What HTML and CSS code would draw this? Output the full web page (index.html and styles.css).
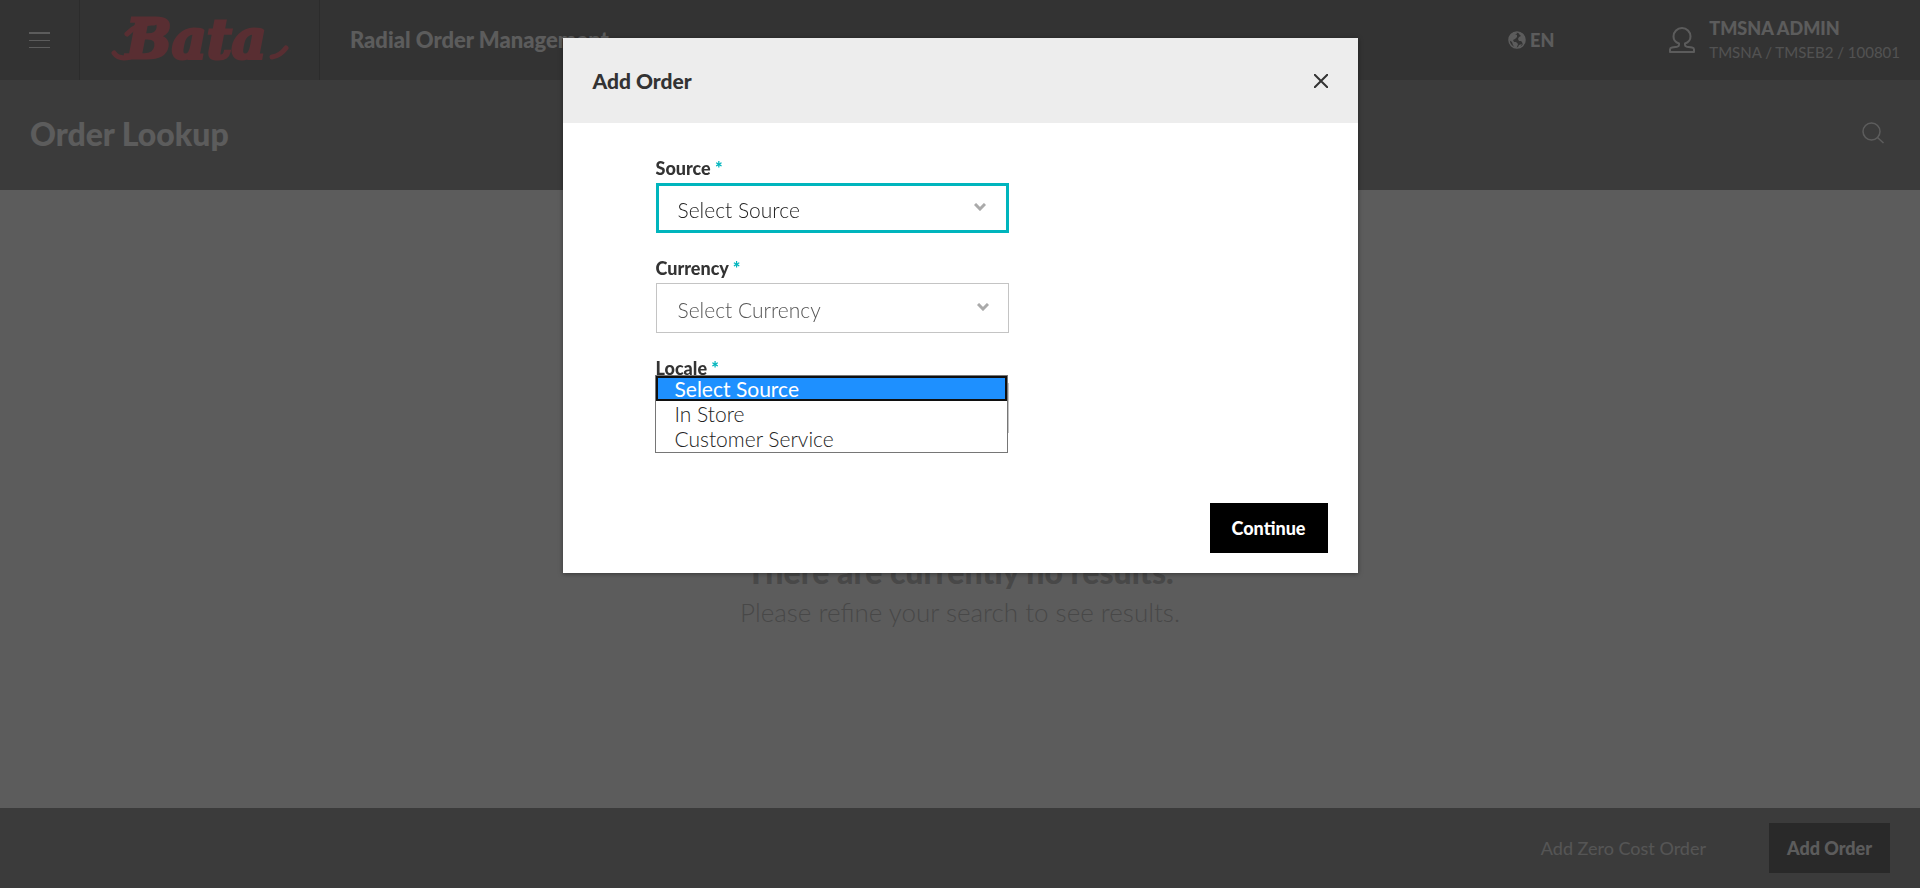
FILE: index.html
```html
<!DOCTYPE html>
<html lang="en">
<head>
<meta charset="utf-8">
<title>Radial Order Management</title>
<link rel="stylesheet" href="styles.css">
</head>
<body>
<div class="app">
  <header class="topbar">
    <button class="menu-btn" type="button" aria-label="Menu">
      <svg width="22" height="18" viewBox="0 0 22 18" fill="#fff" aria-hidden="true"><path d="M0 1h21v2H0zM0 9h21v1H0zM0 16h21v1H0z"/></svg>
    </button>
    <a class="brand" href="#" aria-label="Bata">
      <svg class="brand-logo" width="180" height="64" viewBox="0 0 180 64" aria-hidden="true">
        <text class="brand-text" x="16" y="50">Bata</text>
        <path class="brand-stroke" d="M4 45q5 7 16 4M17 26Q28 14 44 15M162 49q8-1 14-9"/>
      </svg>
    </a>
    <div class="app-name">Radial Order Management</div>
    <button class="lang-btn" type="button">
      <svg width="18" height="18" viewBox="0 0 18 18" aria-hidden="true">
        <circle cx="9" cy="9" r="8" fill="none" stroke="#fff" stroke-width="1.500"/>
        <path fill="#fff" d="M1 8 2 4 6 1h2l1 2-2 1 2 0v2L7 8 5 9l1 2 2 0 2 2-1 3-2 1-2-3-1-3-3-2zM10 1l5 2 2 5v3l-2 3-1-3-1-1-2 0-1-2 1-2 2-1-2-2zM11 14l3-1-2 3-2 0z"/>
      </svg>
      <span>EN</span>
    </button>
    <div class="user">
      <svg width="26" height="26" viewBox="0 0 26 26" fill="none" stroke="#fff" stroke-width="2" stroke-linejoin="round" aria-hidden="true"><path d="M10 16.500C7 15.500 4.500 13 4.500 9.500a8.500 8.500 0 0 1 17 0c0 3.500-2.500 6-5.500 7v1.500c0 1 1 1.500 2 1.700l5 .8c1.500.3 2 .8 2 2v2.500H1v-2.500c0-1.200.5-1.700 2-2l5-.8c1-.2 2-.7 2-1.700z"/></svg>
      <div class="user-text">
        <div class="user-name">TMSNA ADMIN</div>
        <div class="user-meta">TMSNA / TMSEB2 / 100801</div>
      </div>
    </div>
  </header>
  <div class="subbar">
    <h1 class="page-title">Order Lookup</h1>
    <button class="search-btn" type="button" aria-label="Search">
      <svg width="22" height="22" viewBox="0 0 22 22" fill="none" stroke="#fff" stroke-width="1.5" aria-hidden="true"><circle cx="9.500" cy="9.500" r="8.500"/><path d="m15.500 15.500 6 5.500"/></svg>
    </button>
  </div>
  <main class="results">
    <h2 class="empty-title">There are currently no results.</h2>
    <p class="empty-text">Please refine your search to see results.</p>
  </main>
  <footer class="footer">
    <a class="footer-link" href="#">Add Zero Cost Order</a>
    <button class="btn btn-footer" type="button">Add Order</button>
  </footer>
</div>

<div class="overlay">
  <div class="modal" role="dialog" aria-modal="true" aria-labelledby="modal-title">
    <div class="modal-head">
      <h2 class="modal-title" id="modal-title">Add Order</h2>
      <button class="close-btn" type="button" aria-label="Close">
        <svg width="14" height="14" viewBox="0 0 14 14" stroke="#333" stroke-width="2" aria-hidden="true"><path d="m0 0 14 14M14 0 0 14"/></svg>
      </button>
    </div>
    <form class="modal-form">
      <div class="field">
        <label class="field-label" for="source">Source <span class="req">*</span></label>
        <div class="select-wrap">
          <select class="select select-active" id="source"><option>Select Source</option><option>In Store</option><option>Customer Service</option></select>
          <svg class="chevron chevron-active" width="12" height="8" viewBox="0 0 12 8" aria-hidden="true"><path d="m1 1 5 5 5-5"/></svg>
        </div>
      </div>
      <div class="field">
        <label class="field-label" for="currency">Currency <span class="req">*</span></label>
        <div class="select-wrap">
          <select class="select" id="currency"><option>Select Currency</option></select>
          <svg class="chevron" width="12" height="8" viewBox="0 0 12 8" aria-hidden="true"><path d="m1 1 5 5 5-5"/></svg>
        </div>
      </div>
      <div class="field">
        <label class="field-label" for="locale">Locale <span class="req">*</span></label>
        <div class="select-wrap">
          <select class="select" id="locale"><option></option></select>
        </div>
        <ul class="options" role="listbox" aria-label="Source">
          <li class="option option-current" role="option" aria-selected="true">Select Source</li>
          <li class="option" role="option">In Store</li>
          <li class="option" role="option">Customer Service</li>
        </ul>
      </div>
      <div class="modal-actions">
        <button class="btn btn-continue" type="button">Continue</button>
      </div>
    </form>
  </div>
</div>
</body>
</html>
```
FILE: styles.css
```css
* { box-sizing: border-box; }
body {
  margin: 0;
  font-family: Lato, "Open Sans", sans-serif;
  font-size: 18px;
  color: #333;
}
h1, h2, p, ul { margin: 0; padding: 0; }
button { border: 0; padding: 0; background: none; color: inherit; font-family: inherit; cursor: pointer; }
svg { display: block; flex: none; }

.app { display: flex; flex-direction: column; min-height: 100vh; background: #fff; }

.topbar { display: flex; align-items: stretch; height: 80px; background: #333; color: #fff; }
.menu-btn { display: flex; align-items: center; width: 80px; padding-left: 29px; border-right: 1px solid #111; }
.brand { display: flex; align-items: center; justify-content: center; width: 240px; border-right: 1px solid #111; }
.brand-text {
  font-family: "DejaVu Serif", serif;
  font-size: 54px;
  font-weight: 700;
  font-style: italic;
  fill: #ed1c2e;
  stroke: #ed1c2e;
  stroke-width: 3;
}
.brand-stroke { fill: none; stroke: #ed1c2e; stroke-width: 5; stroke-linecap: round; }
.app-name { flex: 1; padding-left: 30px; font-size: 22px; font-weight: 900; line-height: 80px; }
.lang-btn { display: flex; align-items: center; gap: 4px; margin-right: 115px; font-size: 18px; font-weight: 900; }
.user { display: flex; align-items: center; gap: 14px; padding-right: 20px; }
.user-name { font-weight: 900; font-size: 18px; line-height: 24px; }
.user-meta { font-size: 15px; line-height: 24px; color: #ccc; }

.subbar { display: flex; align-items: center; justify-content: space-between; height: 110px; padding: 0 36px 4px 30px; background: #5b5b5b; color: #fff; }
.page-title { font-size: 32px; font-weight: 900; }

.results { flex: 1; padding-top: 360px; text-align: center; color: #999; }
.empty-title { font-size: 32px; font-weight: 900; line-height: 44px; }
.empty-text { font-size: 26px; font-weight: 300; line-height: 36px; }

.footer { display: flex; align-items: center; justify-content: flex-end; gap: 63px; height: 80px; padding-right: 30px; background: #5b5b5b; color: #fff; }
.footer-link { color: #ddd; text-decoration: none; }
.btn { height: 50px; background: #000; color: #fff; font-size: 18px; font-weight: 900; }
.btn-footer { width: 121px; }
.btn-continue { width: 118px; }

.overlay {
  position: fixed;
  inset: 0;
  display: flex;
  justify-content: center;
  align-items: flex-start;
  padding-top: 38px;
  background: rgb(51 51 51 / 80%);
}
.modal { width: 795px; max-width: 100%; background: #fff; box-shadow: 0 1px 5px rgb(0 0 0 / 40%); }
.modal-head { display: flex; align-items: center; justify-content: space-between; height: 85px; padding: 0 30px; background: #ededed; }
.modal-title { font-size: 21px; font-weight: 900; line-height: 24px; }
.modal-form { padding: 35px 30px 20px 93px; }
.field { position: relative; width: 353px; margin-bottom: 25px; }
.field-label { display: block; padding-bottom: 4px; font-size: 18px; font-weight: 900; line-height: 21px; }
.req { color: #00b5bd; }
.select-wrap { position: relative; }
.select {
  display: block;
  width: 100%;
  height: 50px;
  padding: 2px 40px 0 21px;
  border: 1px solid #c4c4c4;
  border-radius: 0;
  background: #fff;
  color: #555;
  font-family: inherit;
  font-size: 21px;
  font-weight: 300;
  appearance: none;
}
.select-active { padding-left: 19px; border: 3px solid #00b5bd; color: #222; }
.chevron { position: absolute; top: 20px; right: 20px; fill: none; stroke: #aaa; stroke-width: 3; }
.chevron-active { right: 23px; }
.options {
  position: absolute;
  top: 17px;
  left: -1px;
  width: 353px;
  padding-bottom: 1px;
  border: 1px solid #767676;
  background: #fff;
  list-style: none;
}
.option { padding-left: 19px; color: #222; font-size: 21px; font-weight: 300; line-height: 25px; }
.option-current { padding-left: 17px; border: 2px solid #101010; background: #1e90ff; color: #fff; font-weight: 400; line-height: 21px; }
.modal-actions { display: flex; justify-content: flex-end; padding-top: 45px; }
```
